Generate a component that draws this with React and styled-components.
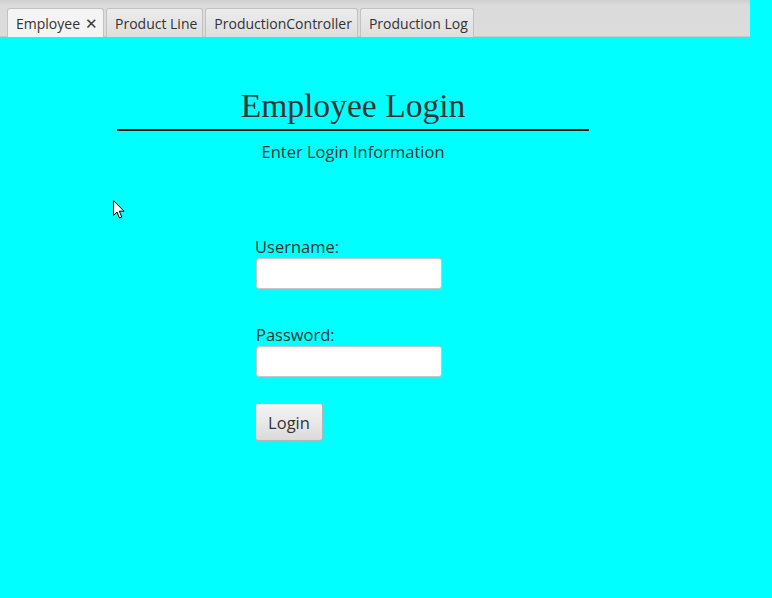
import React from "react";
import styled, { createGlobalStyle } from "styled-components";

const GlobalStyle = createGlobalStyle`
  html, body {
    margin: 0;
    padding: 0;
    background: #00ffff;
  }
  body {
    font-family: "Open Sans", "Noto Sans", sans-serif;
    color: #333333;
  }
`;

const tabs = ["Employee", "Product Line", "ProductionController", "Production Log"];

const App = () => {
  return (
    <Page>
      <GlobalStyle />
      <TabBar>
        {tabs.map((name, index) => (
          <Tab key={name} selected={index === 0}>
            {name}
            {index === 0 && <Close>✕</Close>}
          </Tab>
        ))}
      </TabBar>

      <Content>
        <Header>
          <Title>Employee Login</Title>
          <Rule />
          <Subtitle>Enter Login Information</Subtitle>
        </Header>

        <Form>
          <Label>Username:</Label>
          <Input type="text" />
          <Label spaced>Password:</Label>
          <Input type="password" />
          <Button>Login</Button>
        </Form>

        <Cursor viewBox="0 0 12 19" width="12" height="19">
          <path
            d="M0.5 0.5 L0.5 15.5 L4 12 L6.5 18 L8.8 17 L6.3 11.2 L11 11.2 Z"
            fill="#ffffff"
            stroke="#000000"
            strokeWidth="1"
            strokeLinejoin="miter"
          />
        </Cursor>
      </Content>
    </Page>
  );
};

const Page = styled.div`
  min-height: 598px;
  background: #00ffff;
`;

const TabBar = styled.div`
  display: flex;
  align-items: flex-end;
  gap: 2px;
  width: 750px;
  height: 37px;
  box-sizing: border-box;
  padding-left: 7px;
  background: linear-gradient(to bottom, #cfcfcf 0px, #dbdbdb 5px, #dcdcdc 100%);
  border-bottom: 1px solid #c9c9c9;
`;

const Tab = styled.div`
  display: flex;
  align-items: center;
  gap: 5px;
  height: 29px;
  box-sizing: border-box;
  padding: 0 5px 0 8px;
  margin-bottom: -1px;
  border: 1px solid #c2c2c2;
  border-bottom: none;
  border-radius: 3px 3px 0 0;
  font-family: "Open Sans", "Noto Sans", sans-serif;
  font-size: 14px;
  color: #333333;
  background: ${(props) =>
    props.selected
      ? "#f4f4f4"
      : "linear-gradient(to bottom, #ececec 0%, #dedede 100%)"};
`;

const Close = styled.span`
  font-size: 15px;
  line-height: 1;
  color: #3a3a3a;
`;

const Content = styled.div`
  position: relative;
  padding-top: 49px;
`;

const Header = styled.div`
  display: flex;
  flex-direction: column;
  align-items: center;
  width: 472px;
  margin-left: 117px;
`;

const Title = styled.h1`
  margin: 0;
  font-family: "Liberation Serif", "Times New Roman", serif;
  font-weight: normal;
  font-size: 33.6px;
  line-height: 40px;
  color: #333333;
`;

const Rule = styled.div`
  align-self: stretch;
  height: 2px;
  background: #111111;
  margin-top: 3px;
`;

const Subtitle = styled.div`
  margin-top: 10px;
  font-size: 16.5px;
  line-height: 22px;
  color: #333333;
`;

const Form = styled.div`
  display: flex;
  flex-direction: column;
  align-items: flex-start;
  margin: 73px 0 0 255px;
`;

const Label = styled.label`
  font-size: 16.5px;
  line-height: 22px;
  margin-top: ${(props) => (props.spaced ? "35px" : "0")};
  margin-left: ${(props) => (props.spaced ? "1px" : "0")};
  color: #333333;
`;

const Input = styled.input`
  width: 186px;
  height: 31px;
  box-sizing: border-box;
  margin-left: 1px;
  border: 1px solid #c6c6c6;
  border-radius: 3px;
  background: #ffffff;
  box-shadow: inset 0 1px 2px rgba(0, 0, 0, 0.08);
  outline: none;
`;

const Button = styled.button`
  margin-top: 26px;
  width: 68px;
  height: 38px;
  box-sizing: border-box;
  border: 1px solid #b5b5b5;
  border-radius: 3px;
  background: linear-gradient(to bottom, #f4f4f4 0%, #e6e6e6 60%, #dadada 100%);
  font-family: "Open Sans", "Noto Sans", sans-serif;
  font-size: 16.5px;
  color: #333333;
  padding: 0;
`;

const Cursor = styled.svg`
  position: absolute;
  left: 113px;
  top: 163px;
`;

export default App;
